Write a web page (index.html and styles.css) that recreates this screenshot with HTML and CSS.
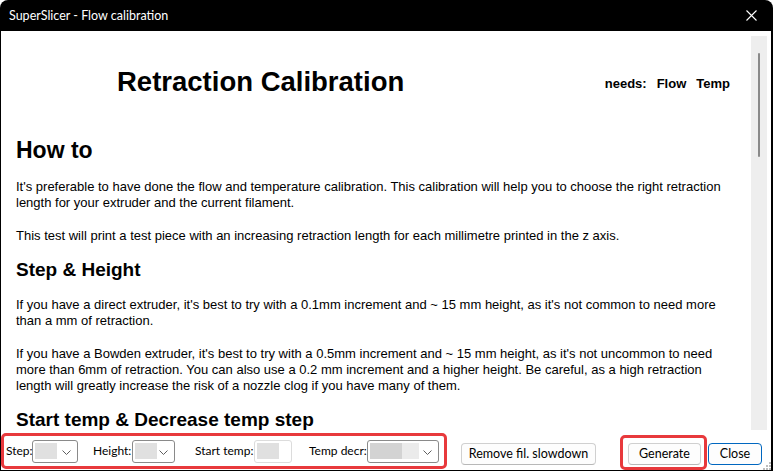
FILE: index.html
```html
<!DOCTYPE html>
<html>
<head>
<meta charset="utf-8">
<title>SuperSlicer - Flow calibration</title>
<link rel="stylesheet" href="styles.css">
</head>
<body>
<div class="window">
  <div class="titlebar">
    <span class="title">SuperSlicer - Flow calibration</span>
    <span class="close-x">
      <svg width="11" height="11" viewBox="0 0 11 11"><path d="M0.5 0.5 L10.5 10.5 M10.5 0.5 L0.5 10.5" stroke="#ffffff" stroke-width="1.1" fill="none"/></svg>
    </span>
  </div>
  <div class="client">
    <div class="htmlarea">
      <div class="content">
        <div class="header">
          <div class="doc-title">Retraction Calibration</div>
          <div class="needs"><span>needs:</span><span class="need">Flow</span><span class="need">Temp</span></div>
        </div>
        <h1 class="h1">How to</h1>
        <p class="p after-h">It's preferable to have done the flow and temperature calibration. This calibration will help you to choose the right retraction<br>length for your extruder and the current filament.</p>
        <p class="p">This test will print a test piece with an increasing retraction length for each millimetre printed in the z axis.</p>
        <h2 class="h2">Step &amp; Height</h2>
        <p class="p after-h2">If you have a direct extruder, it's best to try with a 0.1mm increment and ~ 15 mm height, as it's not common to need more<br>than a mm of retraction.</p>
        <p class="p">If you have a Bowden extruder, it's best to try with a 0.5mm increment and ~ 15 mm height, as it's not uncommon to need<br>more than 6mm of retraction. You can also use a 0.2 mm increment and a higher height. Be careful, as a high retraction<br>length will greatly increase the risk of a nozzle clog if you have many of them.</p>
        <h2 class="h2">Start temp &amp; Decrease temp step</h2>
      </div>
      <div class="scrollbar"><div class="thumb"></div></div>
    </div>
    <div class="bottombar">
      <div class="group group-params">
        <span class="lbl lbl-step">Step:</span>
        <div class="combo combo-step"><span class="fill fill-small"></span><svg class="chev" width="9" height="5" viewBox="0 0 9 5"><polyline points="0.5,0.5 4.5,4.5 8.5,0.5" fill="none" stroke="#5f5f5f" stroke-width="1"/></svg></div>
        <span class="lbl lbl-height">Height:</span>
        <div class="combo combo-height"><span class="fill fill-small"></span><svg class="chev" width="9" height="5" viewBox="0 0 9 5"><polyline points="0.5,0.5 4.5,4.5 8.5,0.5" fill="none" stroke="#5f5f5f" stroke-width="1"/></svg></div>
        <span class="lbl lbl-start">Start temp:</span>
        <div class="textbox"><span class="fill fill-small"></span></div>
        <span class="lbl lbl-decr">Temp decr:</span>
        <div class="combo combo-decr"><span class="fill fill-dark"></span><span class="fill fill-light"></span><svg class="chev" width="9" height="5" viewBox="0 0 9 5"><polyline points="0.5,0.5 4.5,4.5 8.5,0.5" fill="none" stroke="#5f5f5f" stroke-width="1"/></svg></div>
      </div>
      <button class="btn btn-remove">Remove fil. slowdown</button>
      <div class="group group-gen">
        <button class="btn btn-gen">Generate</button>
      </div>
      <button class="btn btn-close">Close</button>
      <svg class="grip" width="9" height="9" viewBox="0 0 9 9">
        <rect x="7" y="1" width="2" height="2" fill="#bdbdbd"/>
        <rect x="4" y="4" width="2" height="2" fill="#bdbdbd"/>
        <rect x="7" y="4" width="2" height="2" fill="#bdbdbd"/>
        <rect x="1" y="7" width="2" height="2" fill="#bdbdbd"/>
        <rect x="4" y="7" width="2" height="2" fill="#bdbdbd"/>
        <rect x="7" y="7" width="2" height="2" fill="#bdbdbd"/>
      </svg>
    </div>
  </div>
</div>
</body>
</html>
```

FILE: styles.css
```css
html, body {
  margin: 0;
  padding: 0;
  background: #ffffff;
}

body {
  width: 773px;
  height: 471px;
  overflow: hidden;
}

.window {
  width: 773px;
  height: 471px;
  box-sizing: border-box;
  background: #000000;
  border-radius: 8px 8px 0 0;
  padding: 0 2px 1px 1px;
  display: flex;
  flex-direction: column;
}

.titlebar {
  height: 31px;
  flex: none;
  display: flex;
  align-items: center;
  color: #ffffff;
  font-family: Lato, "Noto Sans", sans-serif;
  font-size: 12.5px;
}

.title {
  margin-left: 8px;
  margin-top: -1px;
}

.close-x {
  margin-left: auto;
  margin-right: 14px;
  width: 11px;
  height: 11px;
  display: flex;
}

.client {
  flex: 1;
  background: #ffffff;
  display: flex;
  flex-direction: column;
  position: relative;
}

.htmlarea {
  height: 401px;
  flex: none;
  display: flex;
}

.content {
  width: 750px;
  box-sizing: border-box;
  padding: 35px 0 0 15px;
  overflow: hidden;
  font-family: "Liberation Sans", Arial, sans-serif;
  color: #000000;
  white-space: nowrap;
}

.header {
  display: flex;
  align-items: flex-start;
  padding-right: 21px;
}

.doc-title {
  margin-left: 101px;
  font-size: 27.5px;
  line-height: 32px;
  font-weight: bold;
}

.needs {
  margin-left: auto;
  margin-top: 10px;
  font-size: 13px;
  line-height: 16px;
  font-weight: bold;
}

.need {
  margin-left: 10px;
}

.h1 {
  margin: 38px 0 0 0;
  font-size: 23px;
  line-height: 28px;
  font-weight: bold;
}

.h2 {
  margin: 15px 0 0 0;
  font-size: 19px;
  line-height: 22px;
  font-weight: bold;
}

.p {
  margin: 17px 0 0 0;
  font-size: 13px;
  line-height: 16px;
}

.p.after-h {
  margin-top: 15px;
}

.p.after-h2 {
  margin-top: 16px;
}

.scrollbar {
  width: 16px;
  margin: 5px 4px 2px 0;
  background: #eeeeee;
  position: relative;
}

.thumb {
  position: absolute;
  left: 7px;
  top: 17px;
  width: 2px;
  height: 104px;
  border-radius: 1px;
  background: #8a8a8a;
}

.bottombar {
  flex: 1;
  display: flex;
  align-items: flex-start;
  font-family: Lato, "Noto Sans", sans-serif;
  font-size: 12.5px;
  color: #000000;
}

.group {
  box-sizing: border-box;
  border: 3px solid #e8393c;
  border-radius: 5px;
  display: flex;
  align-items: center;
}

.group-params {
  width: 446px;
  height: 36px;
  margin-top: 1px;
  padding-left: 2px;
}

.lbl {
  display: inline-block;
  flex: none;
  white-space: nowrap;
  line-height: 16px;
  font-size: 12px;
  position: relative;
  z-index: 1;
}

.lbl-step { width: 26px; }
.lbl-height { width: 39px; margin-left: 15px; }
.lbl-start { width: 59px; margin-left: 20px; }
.lbl-decr { width: 58px; margin-left: 17px; }

.combo {
  box-sizing: border-box;
  flex: none;
  height: 23px;
  border: 1px solid #8a8a8a;
  border-radius: 3px;
  background: #ffffff;
  display: flex;
  align-items: center;
  padding-left: 2px;
  position: relative;
}

.combo-step { width: 46px; }
.combo-height { width: 43px; }
.combo-decr { width: 72px; }

.chev {
  position: absolute;
  right: 6px;
  top: 9px;
}

.fill {
  display: block;
  height: 16px;
}

.fill-small {
  width: 22px;
  background: #e0e0e0;
}

.fill-dark {
  width: 32px;
  background: #d3d3d3;
}

.fill-light {
  width: 17px;
  background: #ebebeb;
}

.textbox {
  box-sizing: border-box;
  flex: none;
  width: 38px;
  height: 23px;
  border: 1px solid #dcdcdc;
  border-radius: 3px;
  background: #ffffff;
  display: flex;
  align-items: center;
  padding-left: 2px;
}

.btn {
  box-sizing: border-box;
  height: 22px;
  margin-top: 11px;
  padding: 0;
  border: 1px solid #d0d0d0;
  border-bottom-color: #b8b8b8;
  border-radius: 4px;
  background: #fdfdfd;
  font-family: Lato, "Noto Sans", sans-serif;
  font-size: 12.5px;
  line-height: 18px;
  color: #000000;
  text-align: center;
}

.btn-remove {
  width: 135px;
  margin-left: 14px;
}

.group-gen {
  width: 87px;
  height: 35px;
  margin-top: 3px;
  margin-left: 24px;
  align-items: flex-start;
}

.btn-gen {
  width: 73px;
  margin-top: 5px;
  margin-left: 5px;
}

.btn-close {
  width: 54px;
  margin-left: 1px;
  border: 1px solid #0067c0;
}

.grip {
  position: absolute;
  right: 0;
  bottom: 0;
}
```
